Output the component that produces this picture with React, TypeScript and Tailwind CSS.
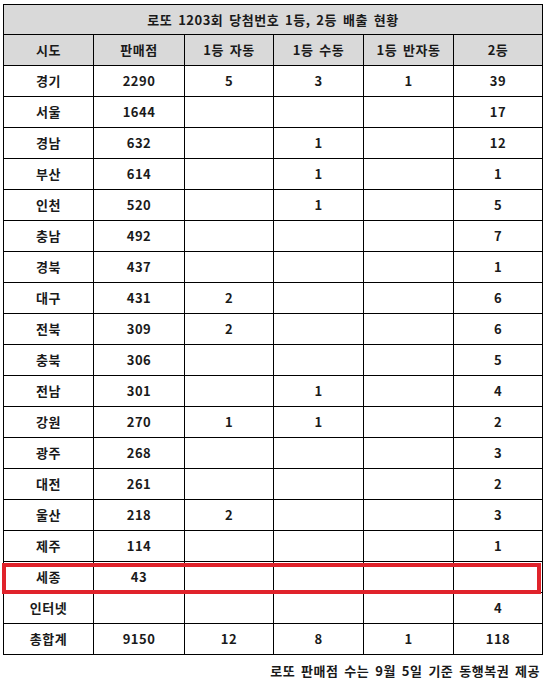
import React from "react";

type Row = [string, string, string, string, string, string];

const rows: Row[] = [
  ["경기", "2290", "5", "3", "1", "39"],
  ["서울", "1644", "", "", "", "17"],
  ["경남", "632", "", "1", "", "12"],
  ["부산", "614", "", "1", "", "1"],
  ["인천", "520", "", "1", "", "5"],
  ["충남", "492", "", "", "", "7"],
  ["경북", "437", "", "", "", "1"],
  ["대구", "431", "2", "", "", "6"],
  ["전북", "309", "2", "", "", "6"],
  ["충북", "306", "", "", "", "5"],
  ["전남", "301", "", "1", "", "4"],
  ["강원", "270", "1", "1", "", "2"],
  ["광주", "268", "", "", "", "3"],
  ["대전", "261", "", "", "", "2"],
  ["울산", "218", "2", "", "", "3"],
  ["제주", "114", "", "", "", "1"],
  ["세종", "43", "", "", "", ""],
  ["인터넷", "", "", "", "", "4"],
  ["총합계", "9150", "12", "8", "1", "118"],
];

const headers = ["시도", "판매점", "1등 자동", "1등 수동", "1등 반자동", "2등"];

export default function App() {
  return (
    <div
      className="relative h-[682px] w-[546px] overflow-hidden bg-white text-[13px] font-bold tracking-[0.5px] text-[#1a1a1a] [word-spacing:2.5px]"
      style={{ fontFamily: '"Malgun Gothic", "Noto Sans CJK KR", "Noto Sans", sans-serif' }}
    >
      <div className="pl-[3px] pt-[4px]">
        <table className="w-[539px] table-fixed border-collapse border border-black">
          <colgroup>
            <col className="w-[90px]" />
            <col className="w-[91px]" />
            <col className="w-[89px]" />
            <col className="w-[90px]" />
            <col className="w-[90px]" />
            <col className="w-[89px]" />
          </colgroup>
          <thead>
            <tr className="h-[30px] bg-[#d9d9d9]">
              <th colSpan={6} className="border border-black text-center font-bold">
                로또 1203회 당첨번호 1등, 2등 배출 현황
              </th>
            </tr>
            <tr className="h-[31px] bg-[#d9d9d9]">
              {headers.map((h) => (
                <th key={h} className="border border-black text-center font-bold">
                  {h}
                </th>
              ))}
            </tr>
          </thead>
          <tbody>
            {rows.map((r) => (
              <tr key={r[0]} className="h-[31px]">
                {r.map((c, i) => (
                  <td key={i} className="border border-black p-0 text-center">
                    {c}
                  </td>
                ))}
              </tr>
            ))}
          </tbody>
        </table>
      </div>

      {/* red highlight over the 세종 row */}
      <div className="pointer-events-none absolute left-[2px] top-[563px] h-[31px] w-[539px] border-[4px] border-[#e0232b]" />

      <p className="mt-[6px] pr-[6px] text-right">로또 판매점 수는 9월 5일 기준 동행복권 제공</p>
    </div>
  );
}
